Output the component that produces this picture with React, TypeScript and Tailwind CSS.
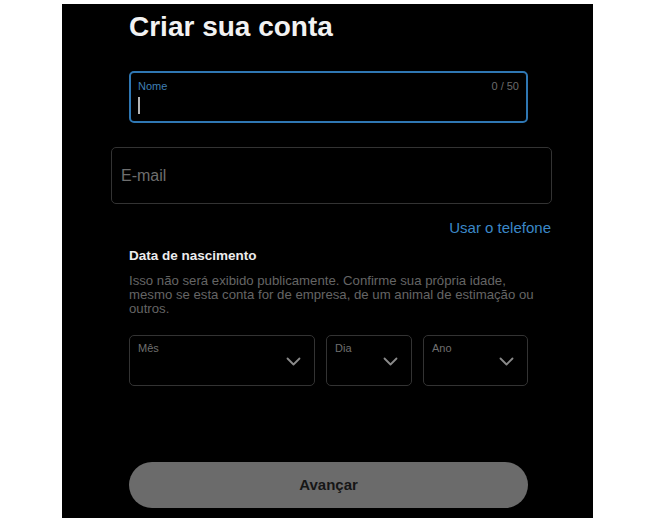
// Sign-up step: name, e-mail, birth date selects and the "Avançar" button.
const font = { fontFamily: '"Liberation Sans", Arial, sans-serif' };

function Chevron() {
  return (
    <svg width="15" height="9" viewBox="0 0 15 9" fill="none" stroke="#8a8a8a" strokeWidth="1.8" strokeLinecap="round" strokeLinejoin="round" aria-hidden>
      <path d="M1.5 1.5l6 6 6-6" />
    </svg>
  );
}

function DateSelect({ label, width }: { label: string; width: string }) {
  return (
    <div className={`${width} flex h-[51px] justify-between rounded-[5px] border border-[#333333] pl-[8px] pr-[13px]`}>
      <span className="self-start pt-[6px] text-[11px] leading-[13px] text-[#6f6f6f]">{label}</span>
      <span className="self-center pt-[1px]"><Chevron /></span>
    </div>
  );
}

export default function App() {
  return (
    <div className="h-[524px] w-[648px] overflow-hidden bg-white pl-[62px] pt-[4px]" style={font}>
      <div className="flex h-[514px] w-[531px] flex-col bg-black pl-[67px] pt-[7px]">
        <h1 className="text-[28px] font-bold leading-[32px] text-[#f2f2f2]">Criar sua conta</h1>

        {/* name — focused */}
        <div className="mt-[28px] flex h-[52px] w-[399px] flex-col rounded-[5px] border-2 border-[#2f77b3] px-[7px] pt-[7px]">
          <div className="flex justify-between text-[11px] leading-[13px]">
            <span className="text-[#3f7fb4]">Nome</span>
            <span className="text-[#6b6b6b]">0 / 50</span>
          </div>
          <span className="mt-[4px] h-[17px] w-[2px] bg-[#b5b5b5]" />
        </div>

        {/* e-mail */}
        <div className="-ml-[18px] mt-[24px] flex h-[57px] w-[441px] items-center rounded-[5px] border border-[#333333] pl-[9px]">
          <span className="text-[16px] text-[#6e6e6e]">E-mail</span>
        </div>
        <div className="-ml-[18px] mt-[15px] flex w-[441px] justify-end pr-[1px]">
          <span className="text-[15px] leading-[18px] text-[#3b88c8]">Usar o telefone</span>
        </div>

        {/* birth date */}
        <h2 className="mt-[11px] text-[13.5px] font-bold leading-[16px] text-[#ececec]">Data de nascimento</h2>
        <p className="mt-[10px] w-[410px] text-[13.2px] leading-[14px] text-[#656565]">
          Isso não será exibido publicamente. Confirme sua própria idade, mesmo se esta conta for de empresa, de um animal de estimação ou outros.
        </p>
        <div className="mt-[19px] flex w-[399px] gap-[11px]">
          <DateSelect label="Mês" width="w-[186px]" />
          <DateSelect label="Dia" width="w-[86px]" />
          <DateSelect label="Ano" width="w-[105px]" />
        </div>

        <button className="mt-[76px] h-[46px] w-[399px] rounded-full bg-[#6b6b6b] text-[15px] font-bold text-[#161616]">
          Avançar
        </button>
      </div>
    </div>
  );
}
